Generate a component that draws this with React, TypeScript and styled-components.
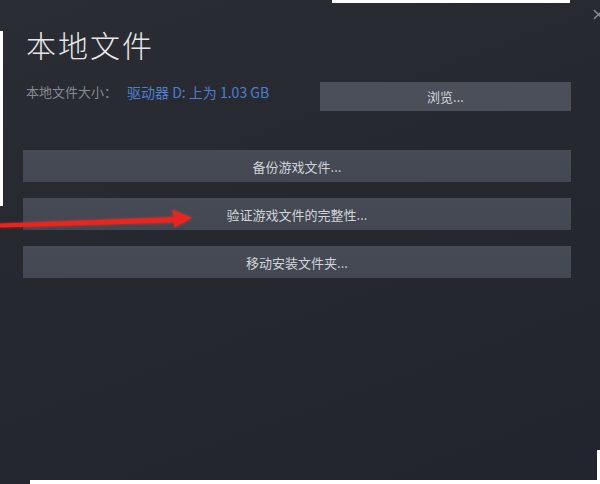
import React from 'react';
import styled, { createGlobalStyle } from 'styled-components';

const GlobalStyle = createGlobalStyle`
    html, body {
        margin: 0;
        padding: 0;
        background: #ffffff;
    }
    body {
        width: 600px;
        height: 484px;
        overflow: hidden;
        font-family: 'Noto Sans CJK SC', 'Noto Sans', sans-serif;
    }
`;

const ACTIONS = ['备份游戏文件...', '验证游戏文件的完整性...', '移动安装文件夹...'];

const App: React.FC = () => {
    return (
        <>
            <GlobalStyle />
            <Panel>
                <CloseIcon viewBox="0 0 12 12">
                    <path d="M1 1 L11 11 M11 1 L1 11" />
                </CloseIcon>
                <Title>本地文件</Title>
                <InfoRow>
                    <SizeInfo>
                        <Label>本地文件大小：</Label>
                        <DriveLink>驱动器 D: 上为 1.03 GB</DriveLink>
                    </SizeInfo>
                    <BrowseButton>浏览...</BrowseButton>
                </InfoRow>
                <ActionList>
                    {ACTIONS.map((action) => (
                        <ActionButton key={action}>{action}</ActionButton>
                    ))}
                </ActionList>
                <Arrow viewBox="0 0 200 30">
                    <path d="M0 25.5 L174 19 L172 11.5 L192 20 L174 29.5 L174.5 24.5 L0 29.5 Z" />
                </Arrow>
            </Panel>
        </>
    );
};

const Panel = styled.div`
    position: relative;
    width: 600px;
    height: 484px;
    box-sizing: border-box;
    padding: 25px 29px 0 23px;
    background: linear-gradient(160deg, #2a2d34 0%, #25282f 45%, #22252e 100%);
    clip-path: polygon(
        0 0,
        332px 0,
        332px 3px,
        570px 3px,
        570px 0,
        600px 0,
        600px 450px,
        597px 450px,
        597px 480px,
        30px 480px,
        30px 484px,
        0 484px,
        0 206px,
        3px 206px,
        3px 31px,
        0 31px
    );
`;

const CloseIcon = styled.svg`
    position: absolute;
    top: 9px;
    right: -4px;
    width: 11px;
    height: 11px;
    stroke: #8a8e95;
    stroke-width: 1.6;
    fill: none;
`;

const Title = styled.h1`
    margin: 0 0 0 3px;
    font-size: 30px;
    line-height: 38px;
    font-weight: 300;
    letter-spacing: 2px;
    color: #e6e7e9;
`;

const InfoRow = styled.div`
    display: flex;
    align-items: center;
    justify-content: space-between;
    margin-top: 19px;
`;

const SizeInfo = styled.div`
    display: flex;
    align-items: center;
    padding-left: 3px;
    margin-top: -10px;
`;

const Label = styled.span`
    color: #868a91;
    font-size: 13px;
`;

const DriveLink = styled.span`
    color: #4d7fd0;
    font-size: 14px;
    margin-left: 10px;
`;

const BrowseButton = styled.div`
    width: 251px;
    height: 29px;
    display: flex;
    align-items: center;
    justify-content: center;
    background: #4a4f5a;
    color: #d4d6da;
    font-size: 13px;
`;

const ActionList = styled.div`
    display: flex;
    flex-direction: column;
    gap: 16px;
    margin-top: 39px;
`;

const ActionButton = styled.div`
    height: 32px;
    display: flex;
    align-items: center;
    justify-content: center;
    background: linear-gradient(180deg, #464b56 0%, #424752 100%);
    color: #d2d4d8;
    font-size: 13px;
`;

const Arrow = styled.svg`
    position: absolute;
    left: 0;
    top: 198px;
    width: 200px;
    height: 30px;
    fill: #e8261f;
    filter: drop-shadow(0 0 1.5px rgba(255, 40, 30, 0.7));
`;

export default App;
